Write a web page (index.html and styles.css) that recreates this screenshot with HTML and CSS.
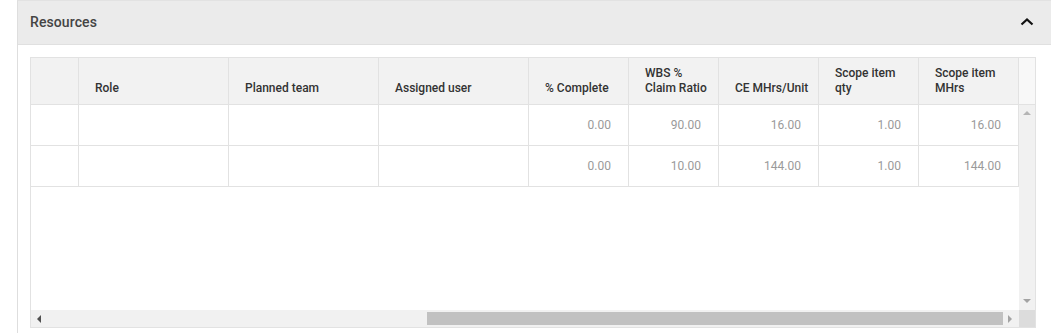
FILE: index.html
```html
<!DOCTYPE html>
<html>
<head>
<meta charset="utf-8">
<link rel="stylesheet" href="styles.css">
</head>
<body>
<section class="panel">
  <header class="panel-head">
    <h2 class="panel-title">Resources</h2>
    <svg class="chevron" width="14" height="10" viewBox="0 0 14 10"><path d="M1.5 7.5 L7 2.5 L12.5 7.5" fill="none" stroke="#111" stroke-width="2.2"/></svg>
  </header>
  <div class="panel-body">
    <div class="grid">
      <div class="grid-head">
        <div class="hcell c0"></div>
        <div class="hcell c1">Role</div>
        <div class="hcell c1">Planned team</div>
        <div class="hcell c1">Assigned user</div>
        <div class="hcell c2">% Complete</div>
        <div class="hcell c3">WBS %<br>Claim Ratio</div>
        <div class="hcell c2">CE MHrs/Unit</div>
        <div class="hcell c2">Scope item<br>qty</div>
        <div class="hcell c2">Scope item<br>MHrs</div>
        <div class="hcell cs"></div>
      </div>
      <div class="grid-main">
        <div class="rows">
          <div class="row">
            <div class="cell c0"></div>
            <div class="cell c1"></div>
            <div class="cell c1"></div>
            <div class="cell c1"></div>
            <div class="cell c2 num">0.00</div>
            <div class="cell c3 num">90.00</div>
            <div class="cell c2 num">16.00</div>
            <div class="cell c2 num">1.00</div>
            <div class="cell c2 num">16.00</div>
          </div>
          <div class="row">
            <div class="cell c0"></div>
            <div class="cell c1"></div>
            <div class="cell c1"></div>
            <div class="cell c1"></div>
            <div class="cell c2 num">0.00</div>
            <div class="cell c3 num">10.00</div>
            <div class="cell c2 num">144.00</div>
            <div class="cell c2 num">1.00</div>
            <div class="cell c2 num">144.00</div>
          </div>
        </div>
        <div class="vscroll">
          <span class="arr up"></span>
          <span class="arr down"></span>
        </div>
      </div>
      <div class="grid-foot">
        <div class="hscroll">
          <span class="arr left"></span>
          <div class="thumb-track"><div class="thumb"></div></div>
          <span class="arr right"></span>
        </div>
        <div class="corner"></div>
      </div>
    </div>
  </div>
</section>
</body>
</html>
```

FILE: styles.css
```css
* { box-sizing: border-box; }
html, body { margin: 0; padding: 0; background: #fff; }
body { font-family: Roboto, "Liberation Sans", sans-serif; overflow: hidden; }

.panel {
  margin-left: 17px;
  width: 1060px;
  height: 340px;
  border-left: 1px solid #dedede;
  border-top: 1px solid #e2e2e2;
}
.panel-head {
  height: 44px;
  background: #ebebeb;
  border-bottom: 1px solid #e0e0e0;
  display: flex;
  align-items: center;
  padding-left: 12px;
}
.panel-title {
  margin: 0;
  font-size: 14px;
  font-weight: 500;
  color: #444;
  flex: 0 0 auto;
  padding-bottom: 1px;
  letter-spacing: 0.1px;
}
.chevron { margin-left: 923px; margin-top: -2px; }

.panel-body { padding: 12px 0 0 12px; }

.grid {
  width: 1006px;
  height: 271px;
  border: 1px solid #e2e2e2;
  display: flex;
  flex-direction: column;
}
.grid-head {
  height: 47px;
  display: flex;
  background: #f2f2f2;
  border-bottom: 1px solid #e2e2e2;
}
.hcell {
  height: 46px;
  border-right: 1px solid #e2e2e2;
  display: flex;
  align-items: flex-end;
  padding: 0 0 8px 16px;
  font-size: 12px;
  line-height: 15px;
  font-weight: 500;
  color: #333;
}
.c0 { width: 48px; }
.c1 { width: 150px; }
.c2 { width: 100px; }
.c3 { width: 90px; }
.hcell.cs { width: 16px; border-right: 0; background: #f8f8f8; padding: 0; }

.grid-main { height: 205px; display: flex; }
.rows { width: 988px; }
.row { display: flex; height: 41px; border-bottom: 1px solid #e2e2e2; }
.cell {
  height: 40px;
  border-right: 1px solid #e2e2e2;
  display: flex;
  align-items: center;
  justify-content: flex-end;
  padding-right: 17px;
  font-size: 12px;
  color: #9a9a9a;
}
.vscroll {
  width: 16px;
  background: #f1f1f1;
  display: flex;
  flex-direction: column;
  justify-content: space-between;
  align-items: center;
  padding: 6px 0 7px;
}
.arr { width: 0; height: 0; display: block; }
.up { border-left: 4px solid transparent; border-right: 4px solid transparent; border-bottom: 4px solid #b5b5b5; }
.down { border-left: 4px solid transparent; border-right: 4px solid transparent; border-top: 4px solid #a3a3a3; }

.grid-foot { height: 17px; display: flex; }
.hscroll {
  width: 988px;
  background: #f1f1f1;
  display: flex;
  align-items: center;
  padding: 0 0 0 6px;
}
.left { border-top: 4px solid transparent; border-bottom: 4px solid transparent; border-right: 4px solid #505050; }
.right { border-top: 4px solid transparent; border-bottom: 4px solid transparent; border-left: 4px solid #a3a3a3; margin: 0 7px 0 5px; }
.thumb-track { flex: 1; display: flex; justify-content: flex-end; height: 13px; align-items: center; }
.thumb { width: 576px; height: 13px; background: #c1c1c1; }
.corner { width: 16px; background: #dcdcdc; }
```
